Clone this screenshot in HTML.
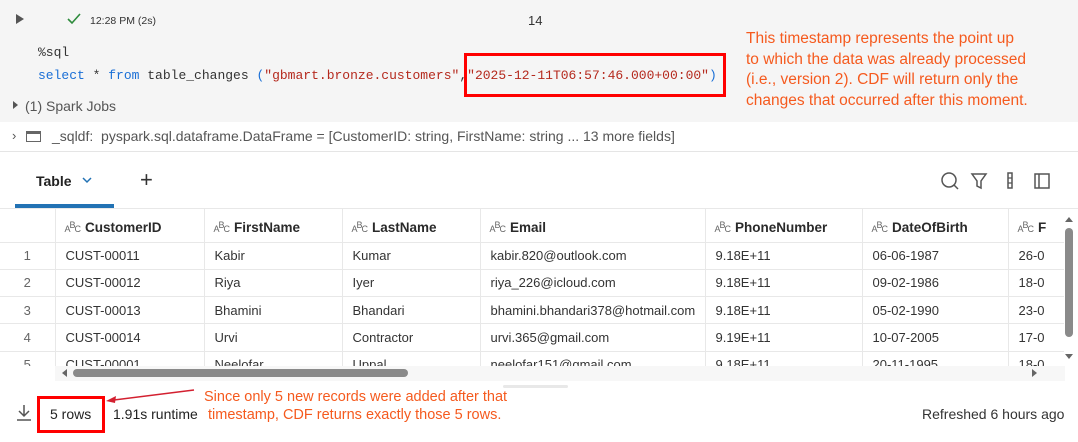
<!DOCTYPE html>
<html><head><meta charset="utf-8"><style>
*{margin:0;padding:0;box-sizing:border-box}
body{width:1078px;height:442px;overflow:hidden;background:#fff;font-family:"Liberation Sans",sans-serif;position:relative;color:#1f1f1f}
.a{position:absolute;white-space:nowrap}
.mono{font-family:"Liberation Mono",monospace;font-size:13px}
.ann{color:#f55a1e;font-size:15.5px;line-height:20.5px}
.red{position:absolute;border:3px solid #f00}
table{position:absolute;left:0;top:208px;border-collapse:collapse;font-size:13px;color:#333}
td{height:27.3px;border-bottom:1px solid #e8e8e8;border-right:1px solid #e8e8e8;padding-left:10px;white-space:nowrap;overflow:hidden}
tr.h td{height:34px;font-weight:bold;color:#2a2a2a;font-size:13.5px;padding-left:9px;padding-top:5px}
td.n{text-align:center;color:#666;padding-left:0}
.abc{font-size:9px;color:#666;font-weight:normal;margin-right:5px;letter-spacing:-1px}
.abc sup{font-size:9px;vertical-align:4px}
</style></head><body>
<div class="a" style="left:0;top:0;width:1078px;height:122px;background:#f5f5f5"></div>
<div class="a" style="left:16px;top:14px;width:0;height:0;border-left:8px solid #555;border-top:5px solid transparent;border-bottom:5px solid transparent"></div>
<svg class="a" style="left:67px;top:13px" width="14" height="12"><path d="M1 6 L5 10 L13 1" stroke="#2e8b3c" stroke-width="1.6" fill="none"/></svg>
<div class="a" style="left:90px;top:15px;font-size:10.5px;color:#333">12:28 PM (2s)</div>
<div class="a" style="left:528px;top:13px;font-size:13px;color:#333">14</div>
<div class="a mono" style="left:38px;top:45px;color:#333">%sql</div>
<div class="a mono" style="left:38px;top:68px;color:#333"><span style="color:#1a6fd6">select</span> * <span style="color:#1a6fd6">from</span> table_changes <span style="color:#1a6fd6">(</span><span style="color:#b5291d">"gbmart.bronze.customers"</span>,<span style="color:#b5291d">"2025-12-11T06:57:46.000+00:00"</span><span style="color:#1a6fd6">)</span></div>
<div class="red" style="left:464px;top:53px;width:262px;height:44px"></div>
<div class="a ann" style="left:746px;top:29px">This timestamp represents the point up<br>to which the data was already processed<br>(i.e., version 2). CDF will return only the<br>changes that occurred after this moment.</div>
<div class="a" style="left:13px;top:101px;width:0;height:0;border-left:5px solid #555;border-top:4px solid transparent;border-bottom:4px solid transparent"></div>
<div class="a" style="left:25px;top:98px;font-size:14px;color:#555">(1) Spark Jobs</div>
<div class="a" style="left:12px;top:128px;font-size:13px;color:#555">›</div>
<div class="a" style="left:26px;top:131px;width:15px;height:11px;border:1.5px solid #666;border-top-width:3px"></div>
<div class="a" style="left:52px;top:128px;font-size:14px;color:#555">_sqldf:&nbsp; pyspark.sql.dataframe.DataFrame = [CustomerID: string, FirstName: string ... 13 more fields]</div>
<div class="a" style="left:0;top:151px;width:1078px;height:1px;background:#e5e5e5"></div>
<div class="a" style="left:36px;top:173px;font-size:14px;font-weight:bold;color:#222">Table</div>
<svg class="a" style="left:82px;top:177px" width="10" height="7"><path d="M1 1 L5 5 L9 1" stroke="#2272b4" stroke-width="1.5" fill="none"/></svg>
<div class="a" style="left:140px;top:167px;font-size:22px;color:#333;font-weight:300">+</div>
<div class="a" style="left:15px;top:204px;width:99px;height:4px;background:#2272b4"></div>
<div class="a" style="left:0;top:208px;width:1078px;height:1px;background:#e8e8e8"></div>
<svg class="a" style="left:938px;top:170px" width="120" height="22">
<circle cx="11" cy="10" r="7" stroke="#555" stroke-width="1.5" fill="none"/><path d="M16 15 L20 19" stroke="#555" stroke-width="1.5"/>
<path d="M34 4 L48 4 L43 11 L43 18 L39 16 L39 11 Z" stroke="#555" stroke-width="1.5" fill="none"/>
<rect x="70" y="3" width="4" height="15" stroke="#555" stroke-width="1.5" fill="none"/><path d="M70 8 H74 M70 13 H74" stroke="#555" stroke-width="1.3"/>
<rect x="97" y="4" width="14" height="14" stroke="#555" stroke-width="1.5" fill="none"/><path d="M101 4 V18" stroke="#555" stroke-width="1.5"/>
</svg>
<div class="a" style="left:0;top:208px;width:1064px;height:158px;overflow:hidden">
<table style="top:0;width:1110px;table-layout:fixed">
<colgroup><col style="width:55px"><col style="width:149px"><col style="width:138px"><col style="width:138px"><col style="width:225px"><col style="width:157px"><col style="width:146px"><col style="width:102px"></colgroup>
<tr class="h"><td></td><td><span class="abc">A<sup>B</sup>C</span>CustomerID</td><td><span class="abc">A<sup>B</sup>C</span>FirstName</td><td><span class="abc">A<sup>B</sup>C</span>LastName</td><td><span class="abc">A<sup>B</sup>C</span>Email</td><td><span class="abc">A<sup>B</sup>C</span>PhoneNumber</td><td><span class="abc">A<sup>B</sup>C</span>DateOfBirth</td><td><span class="abc">A<sup>B</sup>C</span>F</td></tr>
<tr><td class="n">1</td><td>CUST-00011</td><td>Kabir</td><td>Kumar</td><td>kabir.820@outlook.com</td><td>9.18E+11</td><td>06-06-1987</td><td>26-0</td></tr>
<tr><td class="n">2</td><td>CUST-00012</td><td>Riya</td><td>Iyer</td><td>riya_226@icloud.com</td><td>9.18E+11</td><td>09-02-1986</td><td>18-0</td></tr>
<tr><td class="n">3</td><td>CUST-00013</td><td>Bhamini</td><td>Bhandari</td><td>bhamini.bhandari378@hotmail.com</td><td>9.18E+11</td><td>05-02-1990</td><td>23-0</td></tr>
<tr><td class="n">4</td><td>CUST-00014</td><td>Urvi</td><td>Contractor</td><td>urvi.365@gmail.com</td><td>9.19E+11</td><td>10-07-2005</td><td>17-0</td></tr>
<tr><td class="n">5</td><td>CUST-00001</td><td>Neelofar</td><td>Uppal</td><td>neelofar151@gmail.com</td><td>9.18E+11</td><td>20-11-1995</td><td>18-0</td></tr>
</table></div>
<div class="a" style="left:55px;top:366px;width:1010px;height:15px;background:#f7f7f7"></div>
<div class="a" style="left:62px;top:369px;width:0;height:0;border-right:5px solid #666;border-top:4px solid transparent;border-bottom:4px solid transparent"></div>
<div class="a" style="left:73px;top:369px;width:335px;height:8px;border-radius:4px;background:#8a8a8a"></div>
<div class="a" style="left:1032px;top:369px;width:0;height:0;border-left:5px solid #666;border-top:4px solid transparent;border-bottom:4px solid transparent"></div>
<div class="a" style="left:1065px;top:217px;width:0;height:0;border-bottom:5px solid #666;border-left:4px solid transparent;border-right:4px solid transparent"></div>
<div class="a" style="left:1065px;top:228px;width:8px;height:109px;border-radius:4px;background:#8a8a8a"></div>
<div class="a" style="left:1065px;top:354px;width:0;height:0;border-top:5px solid #666;border-left:4px solid transparent;border-right:4px solid transparent"></div>
<div class="a" style="left:503px;top:385px;width:65px;height:3px;border-radius:2px;background:#e8e8e8"></div>
<svg class="a" style="left:16px;top:404px" width="16" height="18"><path d="M8 1 V12 M3 7 L8 12 L13 7 M1 16 H15" stroke="#555" stroke-width="1.5" fill="none"/></svg>
<div class="red" style="left:37px;top:396px;width:68px;height:37px"></div>
<div class="a" style="left:50px;top:406px;font-size:14px;color:#222">5 rows</div>
<div class="a" style="left:113px;top:406px;font-size:14px;color:#222">1.91s runtime</div>
<svg class="a" style="left:100px;top:388px" width="100" height="20"><path d="M94 2 L14 12" stroke="#d32030" stroke-width="1.5"/><path d="M6 13 L16 8 L15 15 Z" fill="#d32030"/></svg>
<div class="a ann" style="left:204px;top:388px;font-size:14.5px;line-height:18px">Since only 5 new records were added after that<br>&nbsp;timestamp, CDF returns exactly those 5 rows.</div>
<div class="a" style="left:922px;top:406px;font-size:14px;color:#333">Refreshed 6 hours ago</div>
</body></html>
